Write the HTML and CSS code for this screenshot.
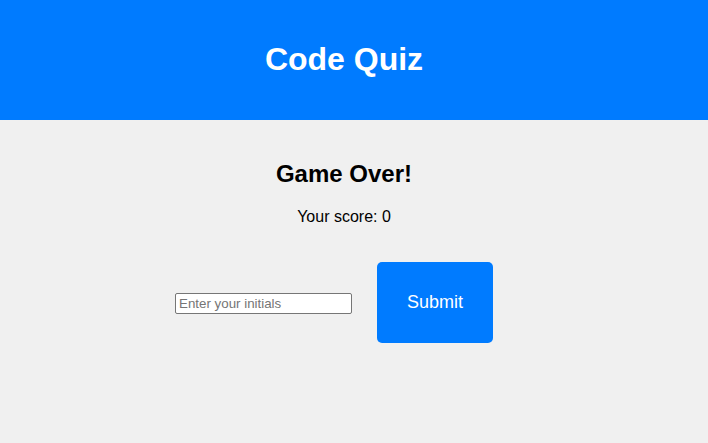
FILE: index.html
```html
<!DOCTYPE html>
<html lang="en">
<head>
<meta charset="utf-8">
<title>Code Quiz</title>
<link rel="stylesheet" href="styles.css">
</head>
<body>
<header class="site-header">
  <h1 class="site-title">Code Quiz</h1>
</header>
<main class="content">
  <h2 class="end-title">Game Over!</h2>
  <p class="score">Your score: 0</p>
  <form class="score-form">
    <input class="initials" type="text" placeholder="Enter your initials">
    <button class="submit-btn" type="button">Submit</button>
  </form>
</main>
</body>
</html>
```
FILE: styles.css
```css
html, body {
  margin: 0;
  padding: 0;
}
body {
  background: #f0f0f0;
  font-family: "Liberation Sans", Arial, sans-serif;
  color: #000;
}
.site-header {
  background: #007bff;
  color: #fff;
  text-align: center;
  padding: 20px 40px 20px 20px;
}
.site-title {
  margin: 21.44px 0;
  font-size: 32px;
  font-weight: bold;
}
.content {
  padding: 20px 20px 0 0;
  text-align: center;
}
.end-title {
  font-size: 24px;
  margin: 19.92px 0;
}
.score {
  font-size: 16px;
  margin: 16px 0;
}
.score-form {
  display: flex;
  justify-content: center;
  align-items: center;
  gap: 25px;
  margin-top: 36px;
  padding-right: 20px;
}
.initials {
  width: 177px;
  height: 21px;
  margin-top: 2px;
  box-sizing: border-box;
  border: 1px solid #767676;
  border-radius: 2px;
  padding: 1px 3px;
  font-family: "Liberation Sans", Arial, sans-serif;
  font-size: 13.33px;
  background: #fff;
}
.initials::placeholder {
  color: #757575;
}
.submit-btn {
  background: #007bff;
  color: #fff;
  border: none;
  border-radius: 5px;
  padding: 30px;
  width: 116px;
  height: 81px;
  font-family: "Liberation Sans", Arial, sans-serif;
  font-size: 18px;
  line-height: 21px;
}
```
